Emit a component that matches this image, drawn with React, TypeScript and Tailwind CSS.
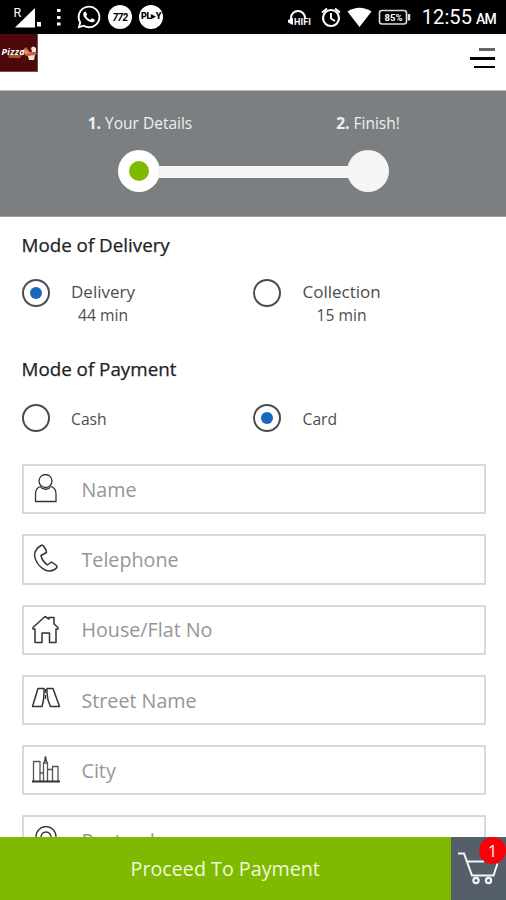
import type { ReactNode } from "react";
import { FaWhatsapp } from "react-icons/fa";

const stroke = { fill: "none", stroke: "#333", strokeWidth: 1.3, strokeLinejoin: "round" as const };

function StatusBar() {
  return (
    <div className="flex h-[34px] shrink-0 items-center justify-between bg-black pl-[14px] pr-[10px] font-[Roboto,sans-serif] text-white">
      <div className="flex items-center">
        <svg width="48" height="34" viewBox="14 0 48 34" fill="#fff">
          <path d="M35 8v19.500H15zM37 22h4v4.500h-4z" />
          <path d="M14 7h8v10h-8z" fill="#000" />
          <text x="13.500" y="17" fontSize="12.500" fontFamily="Roboto">R</text>
          <path d="M57 9h3.500v3H57zM57 16h3.500v3H57zM57 22.500h3.500v3H57z" />
        </svg>
        <FaWhatsapp className="ml-[14px] size-[26px]" />
        <span className="ml-[6px] flex size-[24px] items-center justify-center rounded-full bg-white text-[10px] font-bold italic tracking-[-0.5px] text-black">772</span>
        <span className="ml-[7px] flex size-[24px] items-center justify-center rounded-full bg-white text-[9px] font-black tracking-[-0.3px] text-black">PL▸Y</span>
      </div>
      <div className="flex items-center">
        <svg width="124" height="34" viewBox="288 0 124 34" fill="none" stroke="#fff">
          <path d="M292 20v-2a7 7 0 0 1 14 0v1" strokeWidth="2" />
          <path d="M294 18v7l-5-2.500v-2.500z" fill="#fff" stroke="none" />
          <text x="295" y="25" fontSize="9" fontWeight="700" fill="#fff" stroke="none" fontFamily="Roboto" textLength="17">HIFI</text>
          <circle cx="332" cy="18" r="8" strokeWidth="2.200" />
          <path d="M332 13v5.500l4 2.500M323 12.500l5-4M341 12.500l-5-4" strokeWidth="1.900" />
          <path d="M348.500 11.500q12-7.500 24 0L360.500 27z" fill="#fff" stroke="none" />
          <rect x="380.500" y="10.500" width="27" height="13.500" rx="2.500" strokeWidth="1.600" stroke="#ddd" />
          <path d="M410 14v6.500" strokeWidth="2.500" stroke="#ddd" />
          <text x="385.500" y="21" fontSize="9.500" fontWeight="700" fill="#fff" stroke="none" fontFamily="Roboto" textLength="18">85%</text>
        </svg>
        <span className="ml-[11px] flex items-baseline gap-[4px] leading-none">
          <span className="text-[20px] tracking-[0.1px]">12:55</span>
          <span className="text-[14px] font-medium tracking-[-0.8px]">AM</span>
        </span>
      </div>
    </div>
  );
}

function Logo() {
  return (
    <svg width="38" height="38" viewBox="0 0 38 38" className="bg-[#4d080b]">
      <path d="M8 21h14l-2 3H9z" fill="#a9541c" />
      <path d="M22 17l4-4 4 5 5-1 2 3-5 3-6-1z" fill="#c4633a" />
      <path d="M31 14q2-3 5 0v4h-4zM28 22l7-1-1 5h-5z" fill="#f1e4dd" />
      <text x="1.500" y="21" fontSize="9" fontWeight="700" fontStyle="italic" fill="#fff" fontFamily="Open Sans" textLength="23">Pizza</text>
      <path d="M24 15l6 4-5 1z" fill="#e2a06c" />
      <path d="M37.500 0v38M0 37.500h38" stroke="#765055" />
    </svg>
  );
}

function Header() {
  return (
    <header className="flex h-[56px] shrink-0 items-start justify-between bg-white pr-[11px]">
      <Logo />
      <div className="flex flex-col items-end gap-[6px] pt-[14px]">
        <span className="h-[3px] w-[16px] bg-[#666]" />
        <span className="h-[2.500px] w-[25px] bg-black" />
        <span className="h-[2px] w-[21px] bg-black" />
      </div>
    </header>
  );
}

function Steps() {
  return (
    <div className="h-[127px] shrink-0 border-t border-b border-t-[#b5b8b9] border-b-[#a0a3a4] bg-[#7c7f81] pt-[20px] text-[#f0f0f0]">
      <div className="grid grid-cols-[228px_228px] pl-[26px] text-center text-[15.500px] leading-[24px]">
        <span><b>1.</b> Your Details</span>
        <span><b>2.</b> Finish!</span>
      </div>
      <div className="ml-[118px] mt-[15px] flex items-center">
        <span className="flex size-[42px] items-center justify-center rounded-full bg-white">
          <span className="size-[20px] rounded-full bg-[#7fba00]" />
        </span>
        <span className="-mx-[2px] mt-px h-[12px] w-[191px] bg-[#f5f5f6]" />
        <span className="size-[42px] rounded-full bg-[#f5f5f6]" />
      </div>
    </div>
  );
}

function Option({ label, time, checked }: { label: string; time?: string; checked?: boolean }) {
  return (
    <div className="flex w-[232px] items-start">
      <span className="flex size-[28px] items-center justify-center rounded-full border-[2.500px] border-[#4a4d50] bg-white">
        {checked && <span className="size-[12px] rounded-full bg-[#1766c0]" />}
      </span>
      <div className="ml-[21.500px] text-center text-[#4d4d4d]">
        <div className={time ? "pt-px text-[17px] leading-[24px]" : "pt-[4px] text-[15.700px] leading-[22px]"}>{label}</div>
        {time && <div className="text-[15.700px] leading-[22px]">{time}</div>}
      </div>
    </div>
  );
}

function Field({ icon, label }: { icon: ReactNode; label: string }) {
  return (
    <div className="flex h-[50.300px] shrink-0 items-center border-2 border-[#d9d9d9] bg-white pl-[7px]">
      <svg width="30" height="30" viewBox="0 0 30 30" {...stroke}>{icon}</svg>
      <span className="ml-[21px] pt-px text-[19.700px] leading-[26px] text-[#969696]">{label}</span>
    </div>
  );
}

const fields = [
  {
    label: "Name",
    icon: (
      <>
        <circle cx="14.500" cy="7" r="6.500" />
        <path d="M9.500 12.500Q4.500 14 4.500 20v7.500h20.500v-7.500q0-6-5-7.500M9.500 12.500l1 1.500q4 2.500 8 0l1-1.500" />
      </>
    ),
  },
  {
    label: "Telephone",
    icon: <path d="M11 1Q3.500 5 3.500 11.500 5 21 14 26q7 3 12-2.500l-.5-2-5-3.500-4 3Q11 17 10 11.500l5.500-3-.500-2.500-2.500-4z" strokeWidth="1.500" />,
  },
  {
    label: "House/Flat No",
    icon: <path d="M4 27.500V14H2V12.500L14 1.500l4 2.500V2.500h5V9l4 3.500V14h-2v13.500h-6.500V18H11v9.500z" strokeWidth="1.500" />,
  },
  {
    label: "Street Name",
    icon: (
      <>
        <path d="M7 3.500H13V8l-.5 7-1.500 6.500H1.500zM16 3.500h6L28.500 21.500H19.500L17 15l-1-7z" strokeWidth="1.500" />
        <path d="M14.500 4v4M14.500 10v4" strokeWidth="1.200" />
      </>
    ),
  },
  {
    label: "City",
    icon: (
      <>
        <path d="M2.500 26V6.500H9V26M12.500 26V8l2-4 2 4v18M17 14.500H21.500V26M21.500 16.500v-5H27V26M9 18h3.500M12.500 8h4" stroke="#555" />
        <path d="M1 26.500h28M14.500 1.500v5" strokeWidth="1.900" />
      </>
    ),
  },
  {
    label: "Postcode",
    icon: (
      <>
        <path d="M15 29Q5 17 5 10.500a10 10 0 0 1 20 0Q25 17 15 29z" />
        <circle cx="15" cy="11" r="5" />
      </>
    ),
  },
];

function Footer() {
  return (
    <footer className="flex h-[63px] shrink-0 text-white">
      <button className="w-[450.500px] bg-[#7fba00] text-center text-[19.700px] text-[#eff8dc]">Proceed To Payment</button>
      <div className="relative flex-1 bg-[#555f69]">
        <svg width="55" height="63" viewBox="451 837 55 63" fill="none" stroke="#f3f5f7" strokeWidth="2">
          <path d="M458 853.500h6l8 22h21.500l4-12M467.500 861.500H484" />
          <circle cx="476" cy="880.500" r="2.600" strokeWidth="2.200" />
          <circle cx="488.500" cy="880.500" r="2.600" strokeWidth="2.200" />
        </svg>
        <span className="absolute right-0 top-0 flex size-[27px] items-center justify-center rounded-full bg-[#fb0007] text-[16px]">1</span>
      </div>
    </footer>
  );
}

export default function App() {
  return (
    <div className="flex h-[900px] w-[506px] flex-col overflow-hidden bg-white font-['Open_Sans','Noto_Sans',sans-serif]">
      <StatusBar />
      <Header />
      <Steps />
      <main className="flex min-h-0 flex-1 flex-col overflow-hidden px-[21.500px] pt-[16px] text-[#222]">
        <h2 className="text-[18.800px] font-medium leading-[24px] [-webkit-text-stroke:0.250px_#222]">Mode of Delivery</h2>
        <div className="mt-[22px] flex h-[56px] shrink-0">
          <Option label="Delivery" time="44 min" checked />
          <Option label="Collection" time="15 min" />
        </div>
        <h2 className="mt-[22px] text-[18.800px] font-medium leading-[24px] [-webkit-text-stroke:0.250px_#222]">Mode of Payment</h2>
        <div className="mt-[23px] flex h-[60px] shrink-0">
          <Option label="Cash" />
          <Option label="Card" checked />
        </div>
        <div className="flex w-[464px] flex-col gap-[20px]">
          {fields.map((f) => (
            <Field key={f.label} {...f} />
          ))}
        </div>
      </main>
      <Footer />
    </div>
  );
}
